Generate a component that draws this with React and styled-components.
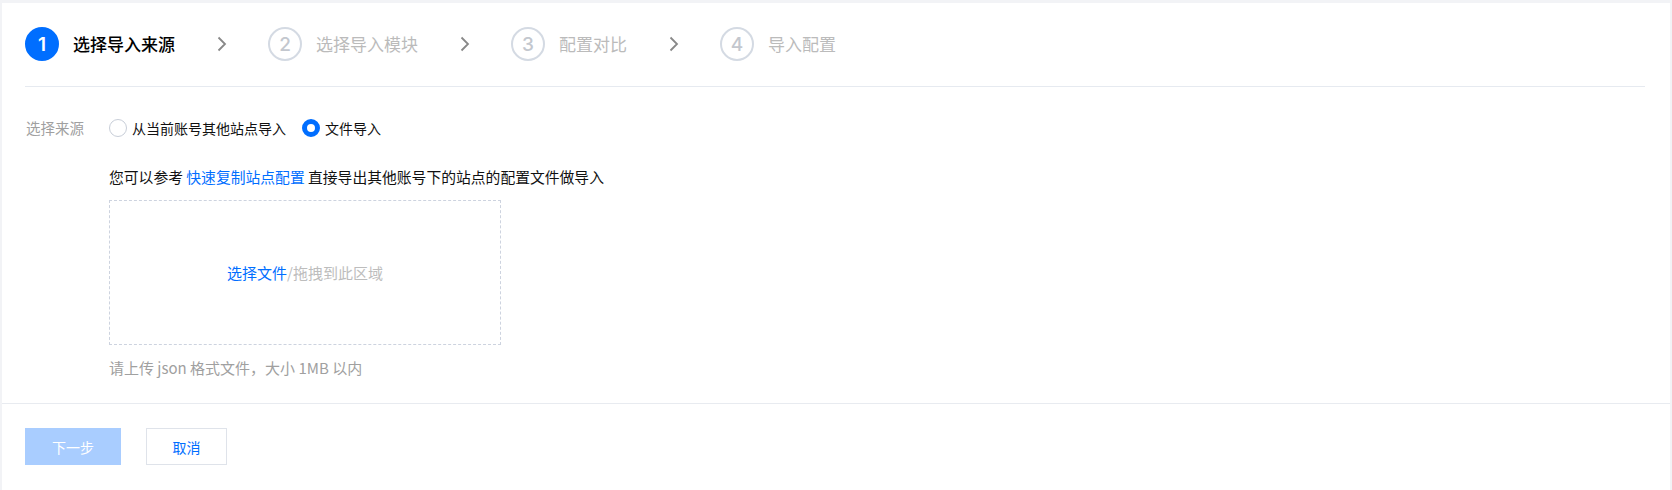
import React, { useState } from 'react';
import styled, { createGlobalStyle } from 'styled-components';

const GlobalStyle = createGlobalStyle`
  html, body {
    margin: 0;
    padding: 0;
    background: #f2f3f6;
  }

  body {
    font-family: "Noto Sans CJK SC", "Noto Sans", sans-serif;
    color: #000;
    -webkit-font-smoothing: antialiased;
  }
`;

const Page = styled.div`
  height: 490px;
  overflow: hidden;
  padding: 3px 2px 0 2px;
  box-sizing: border-box;
`;

const Card = styled.div`
  background: #fff;
  min-height: 600px;
`;

const Steps = styled.div`
  display: flex;
  align-items: center;
  margin: 0 25px 0 23px;
  padding: 24px 0 25px;
  border-bottom: 1px solid #e6eaf0;
`;

const Step = styled.div`
  display: flex;
  align-items: center;
  gap: 14px;
`;

const StepIcon = styled.span`
  box-sizing: border-box;
  width: 34px;
  height: 34px;
  border-radius: 50%;
  display: flex;
  align-items: center;
  justify-content: center;
  font-family: "Inter", "Noto Sans", sans-serif;
  font-size: 19px;
  font-weight: ${p => (p.$active ? 600 : 500)};
  color: ${p => (p.$active ? '#fff' : '#c3c7ce')};
  background: ${p => (p.$active ? '#006eff' : '#fff')};
  border: 2px solid ${p => (p.$active ? '#006eff' : '#d4dae3')};
`;

const StepTitle = styled.span`
  font-size: 17px;
  line-height: 24px;
  font-weight: ${p => (p.$active ? 500 : 400)};
  color: ${p => (p.$active ? '#000' : '#bbbbbb')};
`;

const Chevron = styled.svg`
  display: block;
  margin: 0 41px 0 42px;
  flex: none;
`;

const Form = styled.div`
  padding: 31px 0 25px 24px;
`;

const FieldRow = styled.div`
  display: flex;
  align-items: center;
`;

const Label = styled.span`
  width: 83px;
  flex: none;
  font-size: 14.5px;
  line-height: 20px;
  color: #a0a0a0;
`;

const RadioGroup = styled.div`
  display: flex;
  align-items: center;
  gap: 16px;
`;

const RadioItem = styled.label`
  display: flex;
  align-items: center;
  gap: 5px;
  font-size: 14px;
  line-height: 20px;
  color: #111;
  cursor: pointer;
`;

const RadioDot = styled.span`
  box-sizing: border-box;
  width: 18px;
  height: 18px;
  border-radius: 50%;
  background: #fff;
  border: ${p => (p.$checked ? '5px solid #006eff' : '1px solid #c8ced8')};
`;

const Content = styled.div`
  margin-left: 83px;
`;

const Info = styled.p`
  margin: 29px 0 0;
  font-size: 14.8px;
  line-height: 20px;
  color: #111;
`;

const Link = styled.a`
  color: #006eff;
  text-decoration: none;
  cursor: pointer;
`;

const Dropzone = styled.div`
  margin-top: 13px;
  width: 392px;
  height: 145px;
  box-sizing: border-box;
  border: 1px dashed #cdd3df;
  display: flex;
  align-items: center;
  justify-content: center;
  font-size: 15px;
  line-height: 20px;
`;

const DropHint = styled.span`
  color: #bdbdbd;
`;

const Hint = styled.p`
  margin: 13px 0 0;
  font-size: 15px;
  line-height: 20px;
  color: #a0a0a0;
`;

const Footer = styled.div`
  display: flex;
  gap: 25px;
  padding: 24px 23px;
  border-top: 1px solid #e8ebf0;
`;

const Button = styled.button`
  box-sizing: border-box;
  height: 37px;
  width: ${p => p.$width}px;
  font-family: inherit;
  font-size: 14px;
  border-radius: 0;
  cursor: ${p => (p.disabled ? 'not-allowed' : 'pointer')};
  color: ${p => (p.$primary ? '#fff' : '#006eff')};
  background: ${p => (p.$primary ? '#a9cdff' : '#fff')};
  border: 1px solid ${p => (p.$primary ? '#a9cdff' : '#dfe3ea')};
`;

const steps = ['选择导入来源', '选择导入模块', '配置对比', '导入配置'];

function ChevronIcon() {
  return (
    <Chevron width="10" height="16" viewBox="0 0 10 16">
      <polyline points="1.5,1.5 8,8 1.5,14.5" fill="none" stroke="#888" strokeWidth="1.8" />
    </Chevron>
  );
}

export default function App() {
  const [source, setSource] = useState('file');

  return (
    <Page>
      <GlobalStyle />
      <Card>
        <Steps>
          {steps.map((title, i) => (
            <React.Fragment key={title}>
              <Step>
                <StepIcon $active={i === 0}>{i + 1}</StepIcon>
                <StepTitle $active={i === 0}>{title}</StepTitle>
              </Step>
              {i < steps.length - 1 && <ChevronIcon />}
            </React.Fragment>
          ))}
        </Steps>

        <Form>
          <FieldRow>
            <Label>选择来源</Label>
            <RadioGroup>
              <RadioItem onClick={() => setSource('site')}>
                <RadioDot $checked={source === 'site'} />
                从当前账号其他站点导入
              </RadioItem>
              <RadioItem onClick={() => setSource('file')}>
                <RadioDot $checked={source === 'file'} />
                文件导入
              </RadioItem>
            </RadioGroup>
          </FieldRow>

          <Content>
            <Info>
              您可以参考 <Link>快速复制站点配置</Link> 直接导出其他账号下的站点的配置文件做导入
            </Info>
            <Dropzone>
              <Link>选择文件</Link>
              <DropHint>/拖拽到此区域</DropHint>
            </Dropzone>
            <Hint>请上传 json 格式文件，大小 1MB 以内</Hint>
          </Content>
        </Form>

        <Footer>
          <Button $primary $width={96} disabled>下一步</Button>
          <Button $width={81}>取消</Button>
        </Footer>
      </Card>
    </Page>
  );
}
